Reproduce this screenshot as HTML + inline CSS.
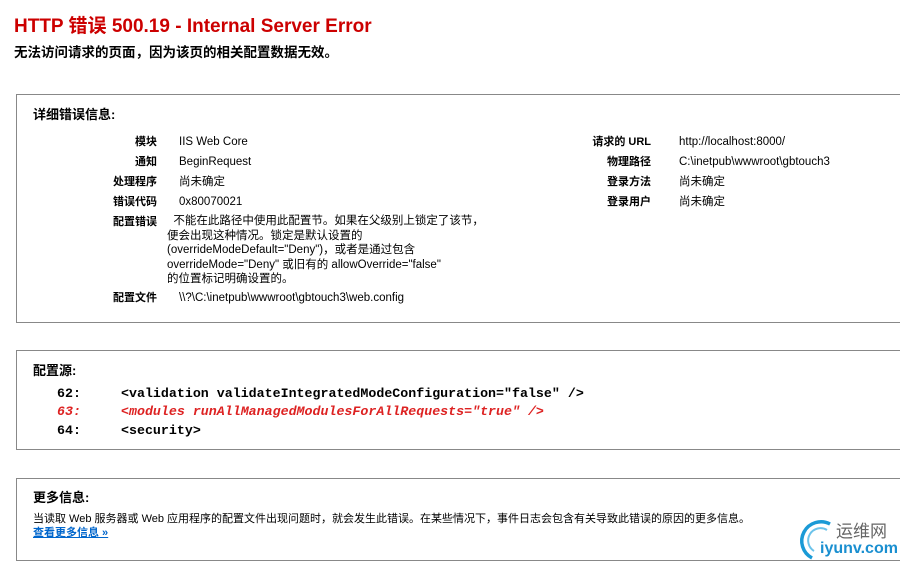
<!DOCTYPE html>
<html><head><meta charset="utf-8"><style>
body{margin:0;width:900px;height:566px;background:#fff;font-family:"Liberation Sans","Noto Sans CJK SC",sans-serif;color:#000;position:relative;overflow:hidden}
.a{position:absolute;white-space:nowrap;line-height:14px}
.box{position:absolute;left:16px;width:900px;border:1px solid #888;border-right:none}
.h{font-size:19px;font-weight:bold;color:#c00;left:14px;top:16px;line-height:22px}
.s{font-size:13.5px;font-weight:bold;left:14px;top:45px;line-height:16px}
.t{font-size:13px;font-weight:bold}
.l{font-size:11px;font-weight:bold;text-align:right;width:60px}
.v{font-size:11.5px}
.m{font-family:"Liberation Mono","Noto Serif CJK SC",monospace;font-size:13.3px;font-weight:bold}
.r{color:#d22;font-style:italic}
</style></head><body>
<div class="a h">HTTP 错误 500.19 - Internal Server Error</div>
<div class="a s">无法访问请求的页面，因为该页的相关配置数据无效。</div>
<div class="box" style="top:94px;height:227px"></div>
<div class="a t" style="left:33px;top:108px">详细错误信息:</div>
<div class="a l" style="left:97px;top:135px">模块</div><div class="a v" style="left:179px;top:135px">IIS Web Core</div>
<div class="a l" style="left:97px;top:155px">通知</div><div class="a v" style="left:179px;top:155px">BeginRequest</div>
<div class="a l" style="left:97px;top:175px">处理程序</div><div class="a v" style="left:179px;top:175px">尚未确定</div>
<div class="a l" style="left:97px;top:195px">错误代码</div><div class="a v" style="left:179px;top:195px">0x80070021</div>
<div class="a l" style="left:97px;top:215px">配置错误</div>
<div class="a v" style="left:167px;top:214px;line-height:14.5px">&nbsp;&nbsp;不能在此路径中使用此配置节。如果在父级别上锁定了该节，<br>便会出现这种情况。锁定是默认设置的<br>(overrideModeDefault="Deny")，或者是通过包含<br>overrideMode="Deny" 或旧有的 allowOverride="false"<br>的位置标记明确设置的。</div>
<div class="a l" style="left:97px;top:291px">配置文件</div><div class="a v" style="left:179px;top:291px">\\?\C:\inetpub\wwwroot\gbtouch3\web.config</div>
<div class="a l" style="left:591px;top:135px">请求的 URL</div><div class="a v" style="left:679px;top:135px">http://localhost:8000/</div>
<div class="a l" style="left:591px;top:155px">物理路径</div><div class="a v" style="left:679px;top:155px">C:\inetpub\wwwroot\gbtouch3</div>
<div class="a l" style="left:591px;top:175px">登录方法</div><div class="a v" style="left:679px;top:175px">尚未确定</div>
<div class="a l" style="left:591px;top:195px">登录用户</div><div class="a v" style="left:679px;top:195px">尚未确定</div>
<div class="box" style="top:350px;height:98px"></div>
<div class="a t" style="left:33px;top:364px">配置源:</div>
<div class="a m" style="left:57px;top:387px">62:</div><div class="a m" style="left:121px;top:387px">&lt;validation validateIntegratedModeConfiguration="false" /&gt;</div>
<div class="a m r" style="left:57px;top:405px">63:</div><div class="a m r" style="left:121px;top:405px">&lt;modules runAllManagedModulesForAllRequests="true" /&gt;</div>
<div class="a m" style="left:57px;top:424px">64:</div><div class="a m" style="left:121px;top:424px">&lt;security&gt;</div>
<div class="box" style="top:478px;height:81px"></div>
<div class="a t" style="left:33px;top:491px">更多信息:</div>
<div class="a" style="left:33px;top:512px;font-size:11px">当读取 Web 服务器或 Web 应用程序的配置文件出现问题时，就会发生此错误。在某些情况下，事件日志会包含有关导致此错误的原因的更多信息。</div>
<div class="a" style="left:33px;top:526px;font-size:11px;color:#06c;font-weight:bold;text-decoration:underline">查看更多信息 »</div>
<svg class="a" style="left:796px;top:518px" width="44" height="44" viewBox="0 0 44 44"><path d="M34 6 A19 19 0 1 0 16 40" fill="none" stroke="#1a9ad6" stroke-width="3.5"/><path d="M31 12 A12 12 0 1 0 18 33" fill="none" stroke="#6cc3ea" stroke-width="2"/></svg>
<div class="a" style="left:836px;top:522px;font-size:17px;color:#666;line-height:20px">运维网</div>
<div class="a" style="left:820px;top:540px;font-size:16px;color:#1a8fd0;font-weight:bold;line-height:18px">iyunv.com</div>
</body></html>
